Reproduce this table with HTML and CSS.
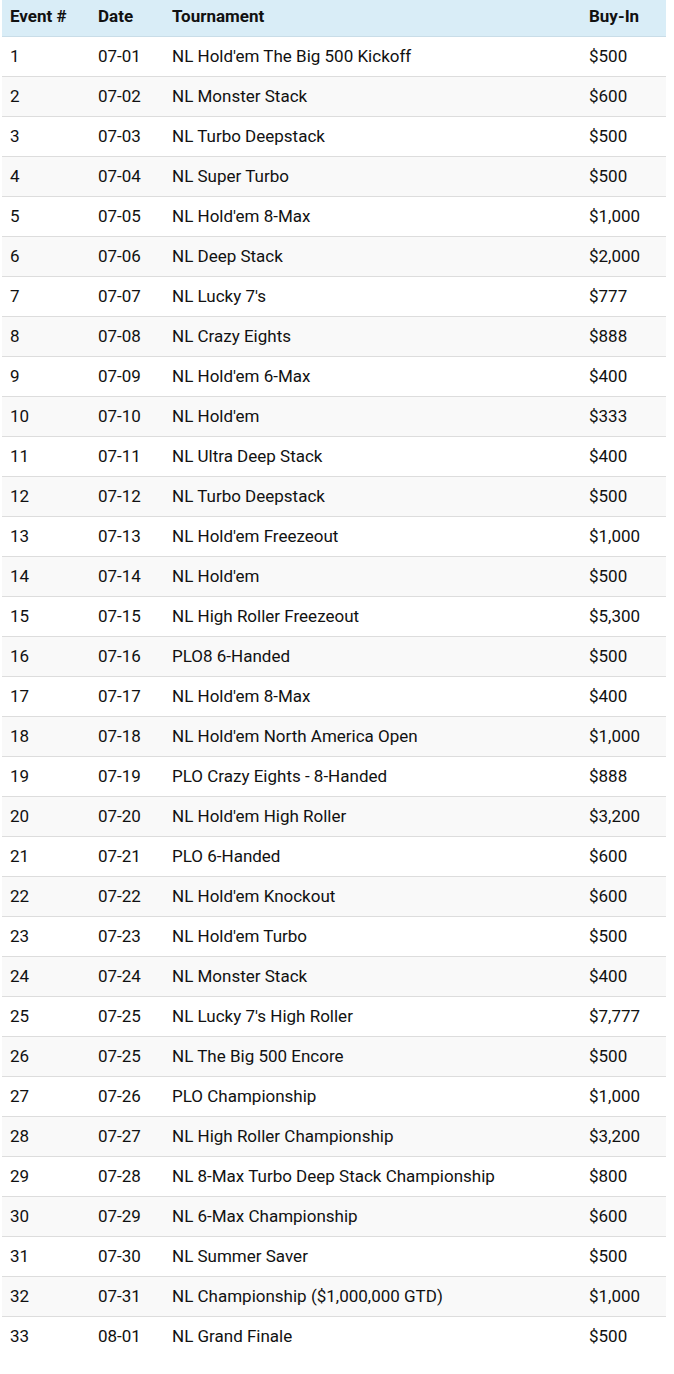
FILE: index.html
```html
<!DOCTYPE html>
<html>
<head>
<meta charset="utf-8">
<link rel="stylesheet" href="styles.css">
</head>
<body>
<table class="schedule">
<colgroup>
<col class="c-num"><col class="c-date"><col class="c-name"><col class="c-buy">
</colgroup>
<thead>
<tr><th>Event #</th><th>Date</th><th>Tournament</th><th>Buy-In</th></tr>
</thead>
<tbody>
<tr><td>1</td><td>07-01</td><td>NL Hold'em The Big 500 Kickoff</td><td>$500</td></tr>
<tr><td>2</td><td>07-02</td><td>NL Monster Stack</td><td>$600</td></tr>
<tr><td>3</td><td>07-03</td><td>NL Turbo Deepstack</td><td>$500</td></tr>
<tr><td>4</td><td>07-04</td><td>NL Super Turbo</td><td>$500</td></tr>
<tr><td>5</td><td>07-05</td><td>NL Hold'em 8-Max</td><td>$1,000</td></tr>
<tr><td>6</td><td>07-06</td><td>NL Deep Stack</td><td>$2,000</td></tr>
<tr><td>7</td><td>07-07</td><td>NL Lucky 7's</td><td>$777</td></tr>
<tr><td>8</td><td>07-08</td><td>NL Crazy Eights</td><td>$888</td></tr>
<tr><td>9</td><td>07-09</td><td>NL Hold'em 6-Max</td><td>$400</td></tr>
<tr><td>10</td><td>07-10</td><td>NL Hold'em</td><td>$333</td></tr>
<tr><td>11</td><td>07-11</td><td>NL Ultra Deep Stack</td><td>$400</td></tr>
<tr><td>12</td><td>07-12</td><td>NL Turbo Deepstack</td><td>$500</td></tr>
<tr><td>13</td><td>07-13</td><td>NL Hold'em Freezeout</td><td>$1,000</td></tr>
<tr><td>14</td><td>07-14</td><td>NL Hold'em</td><td>$500</td></tr>
<tr><td>15</td><td>07-15</td><td>NL High Roller Freezeout</td><td>$5,300</td></tr>
<tr><td>16</td><td>07-16</td><td>PLO8 6-Handed</td><td>$500</td></tr>
<tr><td>17</td><td>07-17</td><td>NL Hold'em 8-Max</td><td>$400</td></tr>
<tr><td>18</td><td>07-18</td><td>NL Hold'em North America Open</td><td>$1,000</td></tr>
<tr><td>19</td><td>07-19</td><td>PLO Crazy Eights - 8-Handed</td><td>$888</td></tr>
<tr><td>20</td><td>07-20</td><td>NL Hold'em High Roller</td><td>$3,200</td></tr>
<tr><td>21</td><td>07-21</td><td>PLO 6-Handed</td><td>$600</td></tr>
<tr><td>22</td><td>07-22</td><td>NL Hold'em Knockout</td><td>$600</td></tr>
<tr><td>23</td><td>07-23</td><td>NL Hold'em Turbo</td><td>$500</td></tr>
<tr><td>24</td><td>07-24</td><td>NL Monster Stack</td><td>$400</td></tr>
<tr><td>25</td><td>07-25</td><td>NL Lucky 7's High Roller</td><td>$7,777</td></tr>
<tr><td>26</td><td>07-25</td><td>NL The Big 500 Encore</td><td>$500</td></tr>
<tr><td>27</td><td>07-26</td><td>PLO Championship</td><td>$1,000</td></tr>
<tr><td>28</td><td>07-27</td><td>NL High Roller Championship</td><td>$3,200</td></tr>
<tr><td>29</td><td>07-28</td><td>NL 8-Max Turbo Deep Stack Championship</td><td>$800</td></tr>
<tr><td>30</td><td>07-29</td><td>NL 6-Max Championship</td><td>$600</td></tr>
<tr><td>31</td><td>07-30</td><td>NL Summer Saver</td><td>$500</td></tr>
<tr><td>32</td><td>07-31</td><td>NL Championship ($1,000,000 GTD)</td><td>$1,000</td></tr>
<tr><td>33</td><td>08-01</td><td>NL Grand Finale</td><td>$500</td></tr>
</tbody>
</table>
</body>
</html>
```
FILE: styles.css
```css
html, body {
  margin: 0;
  padding: 0;
  background: #ffffff;
}
body {
  font-family: Roboto, "Liberation Sans", sans-serif;
  font-size: 17px;
  color: #111111;
}
.schedule {
  margin-left: 2px;
  width: 664px;
  border-collapse: collapse;
  table-layout: fixed;
}
.c-num { width: 88px; }
.c-date { width: 74px; }
.c-name { width: 417px; }
.c-buy { width: 85px; }
.schedule th {
  background: #d9edf7;
  font-weight: 700;
  text-align: left;
  padding: 6px 8px 10px;
  line-height: 20px;
  border-bottom: 1px solid #c9dde8;
}
.schedule td {
  padding: 10px 8px;
  line-height: 19px;
  border-bottom: 1px solid #dddddd;
}
.schedule tbody tr:nth-child(even) td {
  background: #f9f9f9;
}
.schedule tbody tr:last-child td {
  border-bottom: none;
}
```
